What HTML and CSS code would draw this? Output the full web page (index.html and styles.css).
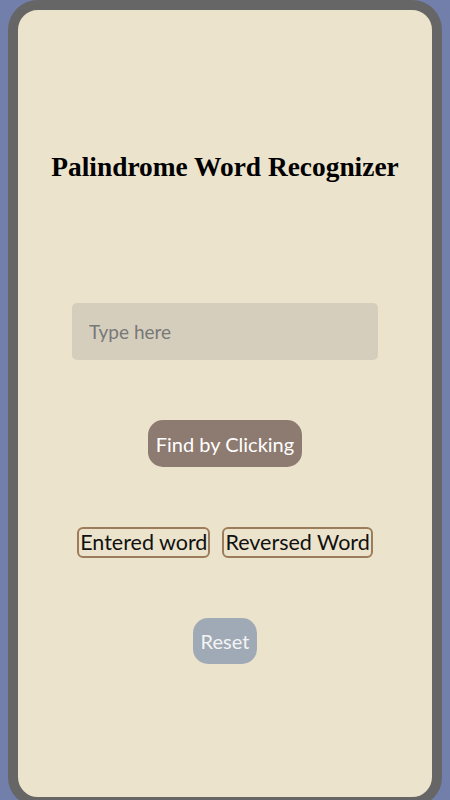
FILE: index.html
```html
<!DOCTYPE html>
<html lang="en">
  <head>
    <meta charset="UTF-8" />
    <meta name="viewport" content="width=device-width, initial-scale=1.0" />
    <title>Palindrome Word Recognizer</title>
    <link rel="stylesheet" href="styles.css">
  </head>
  <body>
    <div id="phone">
      <h1>Palindrome Word Recognizer</h1>

      <input type="text" id="word-input" placeholder="Type here" />

      <button id="find-btn" onclick="findPalindrome()">Find by Clicking</button>

      <div class="result-row">
        <div class="result-box" id="entered">Entered word</div>
        <div class="result-box" id="reversed">Reversed Word</div>
      </div>

      <button id="reset-btn" onclick="resetAll()">Reset</button>
    </div>

    <script>
      function findPalindrome() {
        const word = document.getElementById("word-input").value.trim();
        if (word === "") return;
        const reversed = word.split("").reverse().join("");
        document.getElementById("entered").textContent = word;
        document.getElementById("reversed").textContent = reversed;
      }

      function resetAll() {
        document.getElementById("word-input").value = "";
        document.getElementById("entered").textContent = "Entered word";
        document.getElementById("reversed").textContent = "Reversed Word";
      }
    </script>
  </body>
</html>
```

FILE: styles.css
```css
body {
  margin: 0;
  padding: 0 8px;
  background-color: #737fab;
  font-family: Lato, "Open Sans", sans-serif;
}
#phone {
  height: 787px;
  border: 10px solid #666666;
  border-radius: 30px;
  background-color: #ebe3cb;
  display: flex;
  flex-direction: column;
  align-items: center;
}
h1 {
  font-family: "Liberation Serif", serif;
  font-size: 27.4px;
  line-height: 30px;
  margin: 142px 0 121px;
  color: #000;
}
#word-input {
  width: 306px;
  height: 57px;
  box-sizing: border-box;
  border: none;
  border-radius: 5px;
  background-color: #d5cebd;
  padding: 0 17px;
  font-family: inherit;
  font-size: 19px;
  outline: none;
}
#word-input::placeholder {
  color: #787878;
}
#find-btn {
  margin-top: 60px;
  width: 154px;
  height: 47px;
  border: none;
  border-radius: 15px;
  background-color: #8d7a70;
  color: #fff;
  font-family: inherit;
  font-size: 20px;
  padding: 0;
}
.result-row {
  margin-top: 60px;
  display: flex;
  gap: 12px;
}
.result-box {
  height: 31px;
  box-sizing: border-box;
  border: 2px solid #9c7c5a;
  border-radius: 6px;
  font-size: 21.5px;
  line-height: 26px;
  color: #111;
  padding: 0 1px;
}
#reset-btn {
  margin-top: 60px;
  width: 64px;
  height: 46px;
  border: none;
  border-radius: 15px;
  background-color: #a0aab6;
  color: #f4f4f4;
  font-family: inherit;
  font-size: 20px;
  padding: 0;
}
```
